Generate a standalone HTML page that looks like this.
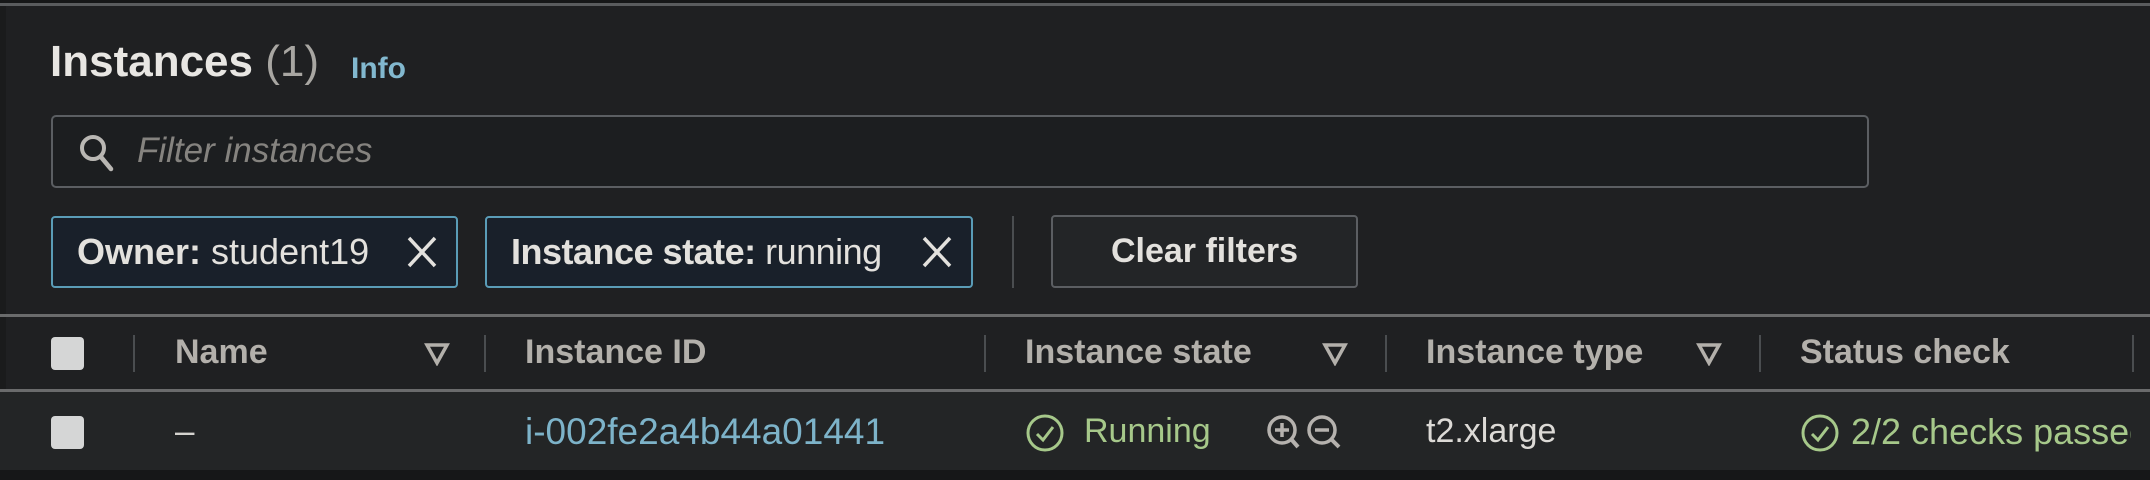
<!DOCTYPE html>
<html><head><meta charset="utf-8"><style>
*{margin:0;padding:0;box-sizing:border-box}
body{width:2150px;height:480px;background:#1f2022;font-family:"Liberation Sans",sans-serif;position:relative;overflow:hidden;color:#d5d3cf}
.a{position:absolute;white-space:nowrap}
.sep{position:absolute;width:2px;background:#4a4d50}
.hd{font-weight:bold;font-size:34px;color:#b3b0ab;top:333px}
.arr{position:absolute;top:342px}
.cb{position:absolute;width:33px;height:33px;background:#d5d6d6;border-radius:4px}
</style></head><body>
<div class="a" style="left:0;top:0;width:2150px;height:3px;background:#161718"></div>
<div class="a" style="left:0;top:3px;width:2150px;height:3px;background:#5a5c5e"></div>
<div class="a" style="left:0;top:6px;width:6px;height:474px;background:#1a1b1c"></div>

<div class="a" style="left:50px;top:37px;font-size:44px;font-weight:bold;color:#e8e6e3">Instances <span style="font-weight:normal;color:#a8a6a2">(1)</span></div>
<div class="a" style="left:351px;top:52px;font-size:30px;font-weight:bold;color:#82b8cf">Info</div>

<div class="a" style="left:51px;top:115px;width:1818px;height:73px;border:2px solid #5b5e62;border-radius:5px;background:#1c1e20"></div>
<svg class="a" style="left:78px;top:133px" width="38" height="40" viewBox="0 0 38 40"><circle cx="15" cy="15" r="11" fill="none" stroke="#b9b7b3" stroke-width="4"/><line x1="23" y1="24" x2="33" y2="36" stroke="#b9b7b3" stroke-width="4.5" stroke-linecap="round"/></svg>
<div class="a" style="left:137px;top:131px;font-size:35px;font-style:italic;color:#85837f">Filter instances</div>

<div class="a" style="left:51px;top:216px;width:407px;height:72px;border:2px solid #5a9cb7;border-radius:4px;background:#19202a"></div>
<div class="a" style="left:77px;top:231px;font-size:36px;color:#e3e1dd"><b>Owner:</b> student19</div>
<svg class="a" style="left:405px;top:235px" width="34" height="34"><path d="M4 3L30 31M30 3L4 31" stroke="#e3e1dd" stroke-width="3.5"/></svg>
<div class="a" style="left:485px;top:216px;width:488px;height:72px;border:2px solid #5a9cb7;border-radius:4px;background:#19202a"></div>
<div class="a" style="left:511px;top:231px;font-size:36px;color:#e3e1dd;letter-spacing:-0.5px"><b>Instance state:</b> running</div>
<svg class="a" style="left:920px;top:235px" width="34" height="34"><path d="M4 3L30 31M30 3L4 31" stroke="#e3e1dd" stroke-width="3.5"/></svg>
<div class="sep" style="left:1012px;top:216px;height:72px"></div>
<div class="a" style="left:1051px;top:215px;width:307px;height:73px;border:2px solid #5b5e62;border-radius:4px;background:#232527;text-align:center;line-height:69px;font-size:34px;font-weight:bold;color:#e3e1dd">Clear filters</div>

<div class="a" style="left:0;top:314px;width:2150px;height:3px;background:#6a6b6c"></div>
<div class="cb" style="left:51px;top:337px"></div>
<div class="sep" style="left:133px;top:335px;height:37px"></div>
<div class="a hd" style="left:175px">Name</div>
<svg class="arr" style="left:424px" width="26" height="24"><path d="M3 3H23L13 21Z" fill="none" stroke="#b3b0ab" stroke-width="3.5"/></svg>
<div class="sep" style="left:484px;top:335px;height:37px"></div>
<div class="a hd" style="left:525px">Instance ID</div>
<div class="sep" style="left:984px;top:335px;height:37px"></div>
<div class="a hd" style="left:1025px">Instance state</div>
<svg class="arr" style="left:1322px" width="26" height="24"><path d="M3 3H23L13 21Z" fill="none" stroke="#b3b0ab" stroke-width="3.5"/></svg>
<div class="sep" style="left:1385px;top:335px;height:37px"></div>
<div class="a hd" style="left:1426px">Instance type</div>
<svg class="arr" style="left:1696px" width="26" height="24"><path d="M3 3H23L13 21Z" fill="none" stroke="#b3b0ab" stroke-width="3.5"/></svg>
<div class="sep" style="left:1759px;top:335px;height:37px"></div>
<div class="a hd" style="left:1800px">Status check</div>
<div class="sep" style="left:2132px;top:335px;height:37px"></div>

<div class="a" style="left:0;top:389px;width:2150px;height:3px;background:#6a6b6c"></div>
<div class="a" style="left:0;top:392px;width:2150px;height:78px;background:#232526"></div>
<div class="a" style="left:0;top:470px;width:2150px;height:10px;background:#161718"></div>
<div class="cb" style="left:51px;top:416px"></div>
<div class="a" style="left:175px;top:412px;font-size:35px;color:#d5d3cf">–</div>
<div class="a" style="left:525px;top:411px;font-size:37px;color:#7db3c9">i-002fe2a4b44a01441</div>
<svg class="a" style="left:1025px;top:413px" width="40" height="40"><circle cx="20" cy="20" r="17" fill="none" stroke="#a6c88a" stroke-width="3"/><path d="M12 21L18 27L28 14" fill="none" stroke="#a6c88a" stroke-width="3"/></svg>
<div class="a" style="left:1084px;top:412px;font-size:34px;color:#a6c88a">Running</div>
<svg class="a" style="left:1266px;top:413px" width="80" height="44"><circle cx="16" cy="17" r="13" fill="none" stroke="#b5b2ae" stroke-width="3.5"/><path d="M9 17H23M16 10V24" stroke="#b5b2ae" stroke-width="3.5"/><path d="M25 26L32 34" stroke="#b5b2ae" stroke-width="4"/><circle cx="56" cy="17" r="13" fill="none" stroke="#b5b2ae" stroke-width="3.5"/><path d="M49 17H63" stroke="#b5b2ae" stroke-width="3.5"/><path d="M65 26L73 34" stroke="#b5b2ae" stroke-width="4"/></svg>
<div class="a" style="left:1426px;top:412px;font-size:34px;color:#dcdad6">t2.xlarge</div>
<svg class="a" style="left:1800px;top:413px" width="40" height="40"><circle cx="20" cy="20" r="17" fill="none" stroke="#a6c88a" stroke-width="3"/><path d="M12 21L18 27L28 14" fill="none" stroke="#a6c88a" stroke-width="3"/></svg>
<div class="a" style="left:1851px;top:411px;width:280px;overflow:hidden;font-size:36px;color:#a6c88a">2/2 checks passed</div>
</body></html>
